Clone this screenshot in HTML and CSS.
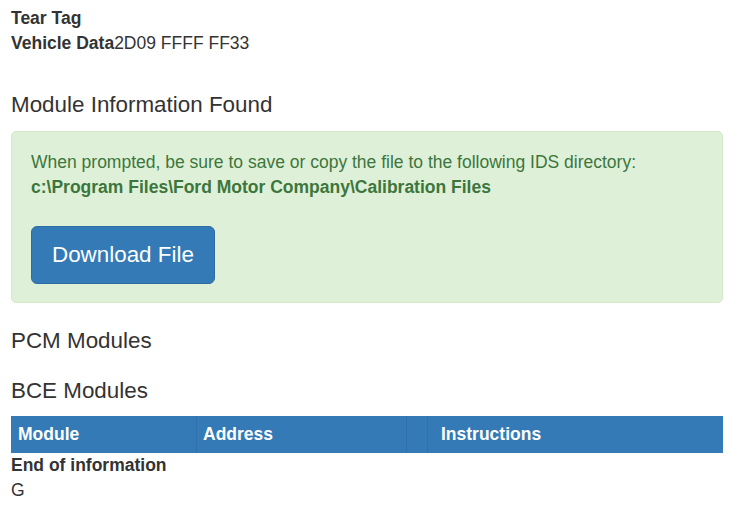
FILE: index.html
```html
<!DOCTYPE html>
<html lang="en">
<head>
    <meta charset="UTF-8">
    <meta name="viewport" content="width=device-width, initial-scale=1.0">
    <title>Module Information</title>
    <link rel="stylesheet" href="styles.css">
</head>
<body>
    <div class="container">
        <div class="tag-info">
            <div><strong>Tear Tag</strong></div>
            <div><strong>Vehicle Data</strong>2D09 FFFF FF33</div>
        </div>

        <h3 class="first">Module Information Found</h3>
        <div class="alert">
            <p>When prompted, be sure to save or copy the file to the following IDS directory:<br>
            <strong>c:\Program Files\Ford Motor Company\Calibration Files</strong></p>
            <a class="btn" href="#">Download File</a>
        </div>

        <h3>PCM Modules</h3>

        <h3>BCE Modules</h3>
        <table class="modules">
            <thead>
                <tr>
                    <th class="col-module">Module</th>
                    <th class="col-address">Address</th>
                    <th class="col-blank"></th>
                    <th class="col-instr">Instructions</th>
                </tr>
            </thead>
            <tbody>
            </tbody>
        </table>

        <div class="footer-info">
            <div><strong>End of information</strong></div>
            <div>G</div>
        </div>
    </div>
</body>
</html>
```

FILE: styles.css
```css
body {
    margin: 0;
    font-family: "Liberation Sans", Arial, sans-serif;
    font-size: 17.5px;
    line-height: 25px;
    color: #333;
    background-color: #fff;
}

.container {
    padding: 6px 14px 0 11px;
}

h3 {
    font-weight: 400;
    font-size: 22.4px;
    line-height: 24px;
    margin: 26px 0 13px;
}

h3.first {
    margin: 37px 0 14px;
}

.alert {
    background-color: #dff0d8;
    border: 1px solid #d6e9c6;
    border-radius: 5px;
    color: #3c763d;
    padding: 18px 19px 18px;
    margin-bottom: 23px;
}

.alert p {
    margin: 0 0 26px;
}

.btn {
    display: inline-block;
    background-color: #337ab7;
    border: 1px solid #2e6da4;
    border-radius: 6px;
    color: #fff;
    text-decoration: none;
    font-size: 22.4px;
    line-height: 30px;
    padding: 13px 20px;
}

.modules {
    width: 100%;
    border-collapse: collapse;
}

.modules th {
    background-color: #337ab7;
    color: #fff;
    text-align: left;
    font-weight: 700;
    height: 37px;
    padding: 0 6px;
    border-left: 1px solid #2f71ab;
}

.modules th:first-child {
    border-left: none;
    padding-left: 7px;
}

.col-module {
    width: 172px;
}

.col-address {
    width: 197px;
}

.col-blank {
    width: 8px;
}

.modules th.col-instr {
    padding-left: 13px;
}
```
